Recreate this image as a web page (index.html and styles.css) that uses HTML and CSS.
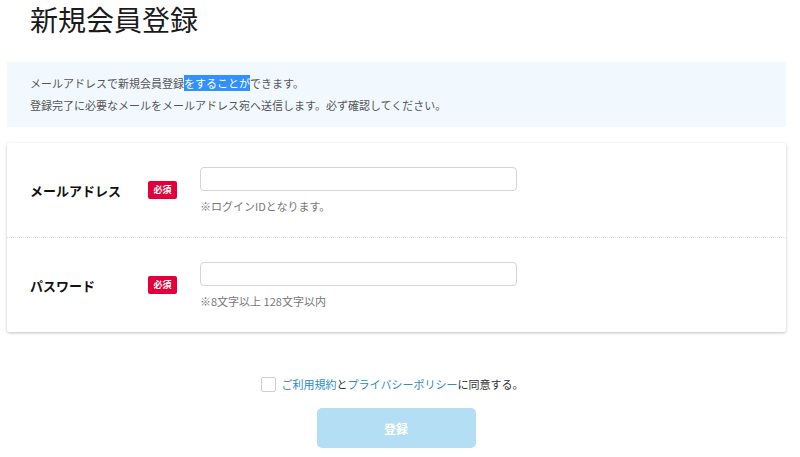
FILE: index.html
```html
<!DOCTYPE html>
<html lang="ja">
<head>
<meta charset="utf-8">
<title>新規会員登録</title>
<link rel="stylesheet" href="styles.css">
</head>
<body>
<div class="page">
  <h1 class="title">新規会員登録</h1>
  <div class="info">
    <p>メールアドレスで新規会員登録<span class="sel">をすることが</span>できます。</p>
    <p>登録完了に必要なメールをメールアドレス宛へ送信します。必ず確認してください。</p>
  </div>
  <div class="card">
    <div class="row">
      <div class="label">メールアドレス</div>
      <span class="badge">必須</span>
      <div class="field">
        <input class="input" type="text">
        <div class="hint">※ログインIDとなります。</div>
      </div>
    </div>
    <div class="row">
      <div class="label">パスワード</div>
      <span class="badge">必須</span>
      <div class="field">
        <input class="input" type="password">
        <div class="hint">※8文字以上 128文字以内</div>
      </div>
    </div>
  </div>
  <div class="agree">
    <span class="check"></span>
    <span class="agree-text"><a class="link">ご利用規約</a>と<a class="link">プライバシーポリシー</a>に同意する。</span>
  </div>
  <div class="actions">
    <button class="submit" type="button">登録</button>
  </div>
</div>
</body>
</html>
```
FILE: styles.css
```css
html, body {
  margin: 0;
  padding: 0;
  background: #ffffff;
}
body {
  font-family: "Noto Sans CJK JP", "Noto Sans", sans-serif;
  color: #333;
}
.page {
  padding: 0 14px 0 7px;
}
.title {
  margin: 0;
  padding: 0 0 0 23px;
  font-size: 28px;
  font-weight: normal;
  line-height: 38px;
  color: #1a1a1a;
}
.info {
  margin-top: 24px;
  background: #f2f9fe;
  padding: 10px 23px 11px;
  height: 44px;
}
.info p {
  margin: 0;
  font-size: 11px;
  line-height: 22px;
  color: #555;
}
.sel {
  background: #3390ff;
  color: #fff;
}
.card {
  margin-top: 16px;
  background: #fff;
  box-shadow: 0 1px 3px rgba(0,0,0,0.25);
  border-radius: 2px;
}
.row {
  display: flex;
  align-items: center;
  height: 94px;
  padding-left: 23px;
  box-sizing: border-box;
}
.row + .row {
  height: 95px;
  border-top: 1px dotted #dcdcdc;
}
.label {
  width: 118px;
  font-size: 13px;
  font-weight: bold;
  color: #111;
}
.badge {
  width: 29px;
  height: 18px;
  line-height: 18px;
  text-align: center;
  background: #e2003a;
  color: #fff;
  font-size: 9px;
  font-weight: bold;
  border-radius: 2px;
}
.field {
  margin-left: 23px;
  display: flex;
  flex-direction: column;
}
.input {
  width: 317px;
  height: 24px;
  box-sizing: border-box;
  border: 1px solid #d4d4d4;
  border-radius: 4px;
  margin: 0;
  padding: 0 6px;
  background: #fff;
}
.hint {
  margin-top: 7px;
  font-size: 11px;
  line-height: 16px;
  color: #777;
}
.agree {
  margin-top: 44px;
  display: flex;
  align-items: center;
  justify-content: center;
  gap: 6px;
  padding-right: 9px;
}
.check {
  width: 15px;
  height: 15px;
  box-sizing: border-box;
  border: 1px solid #cfcfcf;
  border-radius: 2px;
  background: #fff;
}
.agree-text {
  font-size: 11px;
  line-height: 16px;
  color: #333;
}
.link {
  color: #2b8ccc;
}
.actions {
  display: flex;
  justify-content: center;
  margin-top: 16px;
  padding-right: 1px;
}
.submit {
  width: 159px;
  height: 40px;
  border: none;
  border-radius: 5px;
  background: #b3def4;
  color: #fff;
  font-family: "Noto Sans CJK JP", sans-serif;
  font-size: 12px;
  font-weight: bold;
}
```
